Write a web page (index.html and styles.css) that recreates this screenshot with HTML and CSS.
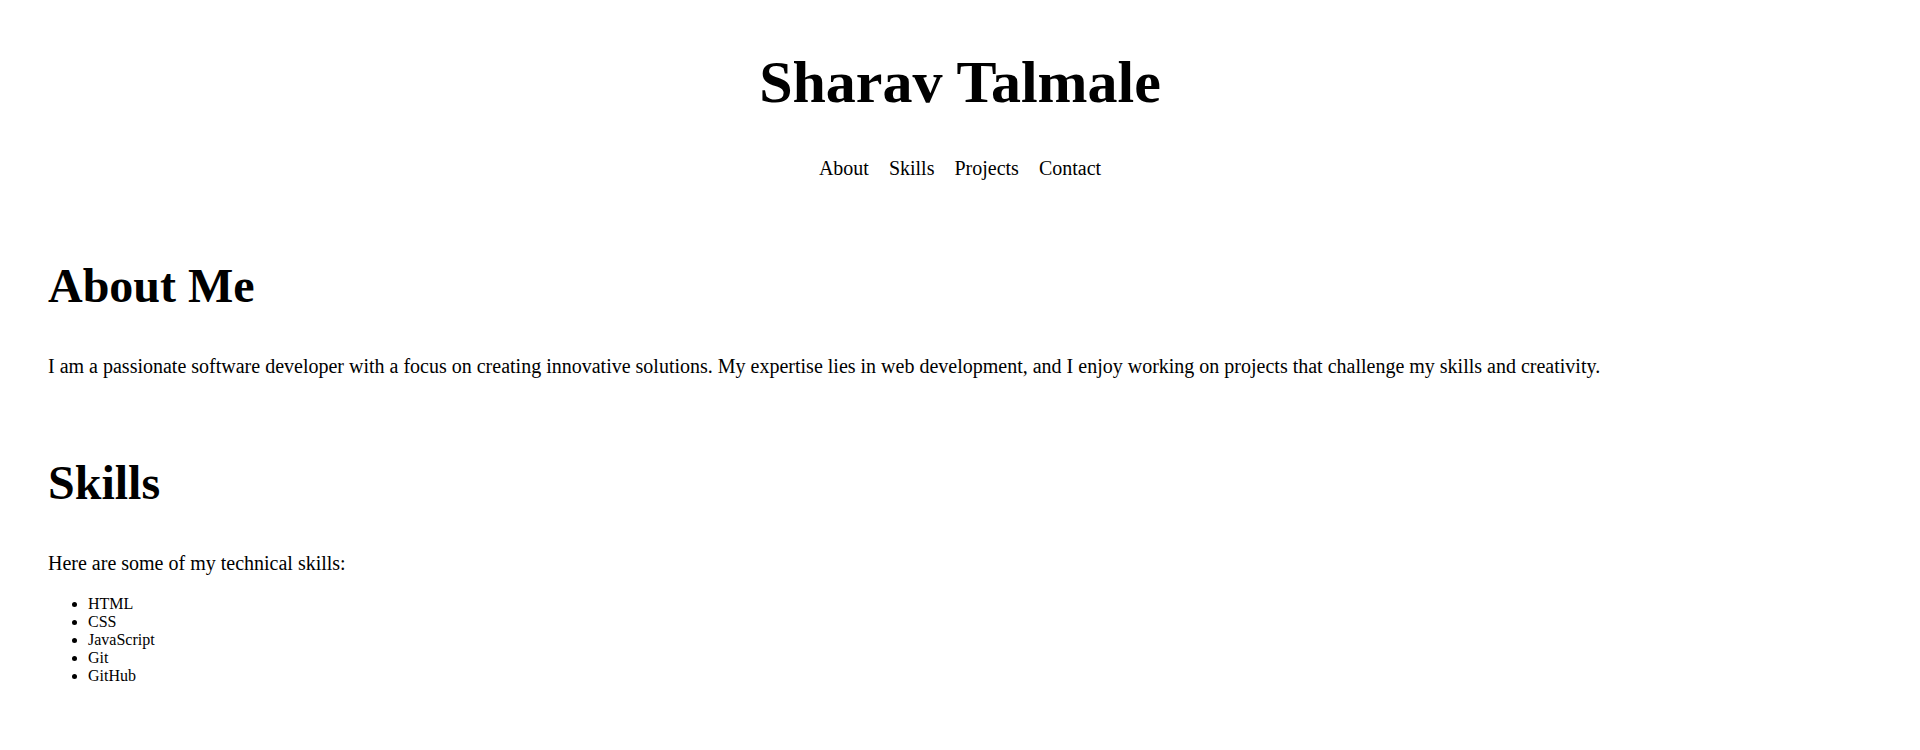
FILE: index.html
```html
<!DOCTYPE html>
<html lang="en">
<head>
<meta charset="utf-8">
<title>Sharav Talmale</title>
<link rel="stylesheet" href="styles.css">
</head>
<body>
<header class="site-header">
  <h1 class="site-title">Sharav Talmale</h1>
  <nav class="site-nav">
    <a href="#about" class="nav-link">About</a>
    <a href="#skills" class="nav-link">Skills</a>
    <a href="#projects" class="nav-link">Projects</a>
    <a href="#contact" class="nav-link">Contact</a>
  </nav>
</header>
<main class="content">
  <section id="about" class="section section-about">
    <h2 class="section-title">About Me</h2>
    <p class="section-text">I am a passionate software developer with a focus on creating innovative solutions. My expertise lies in web development, and I enjoy working on projects that challenge my skills and creativity.</p>
  </section>
  <section id="skills" class="section section-skills">
    <h2 class="section-title">Skills</h2>
    <p class="section-text">Here are some of my technical skills:</p>
    <ul class="skill-list">
      <li>HTML</li>
      <li>CSS</li>
      <li>JavaScript</li>
      <li>Git</li>
      <li>GitHub</li>
    </ul>
  </section>
</main>
</body>
</html>
```
FILE: styles.css
```css
html, body {
  margin: 0;
  padding: 0;
  background: #ffffff;
  color: #000000;
  font-family: "Liberation Serif", "Times New Roman", serif;
}

.site-header {
  padding-top: 48px;
  text-align: center;
}

.site-title {
  margin: 0 0 40px;
  font-size: 60px;
  font-weight: bold;
  line-height: normal;
}

.site-nav {
  display: flex;
  justify-content: center;
  gap: 20px;
  font-size: 20px;
}

.nav-link {
  color: #000000;
  text-decoration: none;
}

.content {
  padding: 78px 48px 0;
}

.section-skills {
  margin-top: 77px;
}

.section-title {
  margin: 0;
  font-size: 48px;
  font-weight: bold;
  line-height: normal;
}

.section-text {
  margin: 42px 0 0;
  font-size: 20px;
}

.skill-list {
  margin: 20px 0 0;
  padding-left: 40px;
  font-size: 16px;
  line-height: 18px;
}
```
